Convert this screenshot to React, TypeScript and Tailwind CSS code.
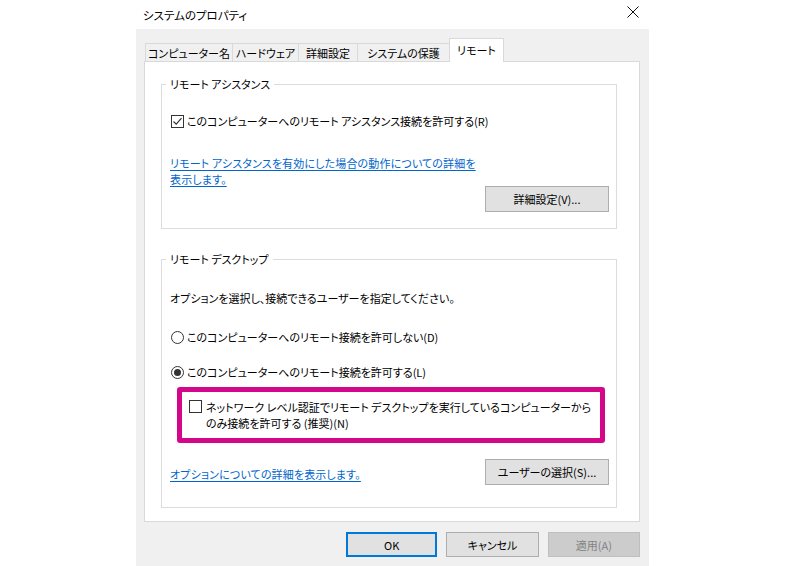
import React from "react";

function CheckBox({ checked }: { checked?: boolean }) {
  return (
    <span className="w-[13px] h-[13px] border border-[#333333] bg-white flex items-center justify-center shrink-0">
      {checked && (
        <svg width="11" height="11" viewBox="0 0 11 11">
          <path d="M1.5 5.5 L4.2 8.2 L9.5 2.2" stroke="#333333" strokeWidth="1.2" fill="none" />
        </svg>
      )}
    </span>
  );
}

function Radio({ checked }: { checked?: boolean }) {
  return (
    <span className="w-[13px] h-[13px] rounded-full border border-[#333333] bg-white flex items-center justify-center shrink-0">
      {checked && <span className="w-[7px] h-[7px] rounded-full bg-[#333333]" />}
    </span>
  );
}

function Btn({ children, className = "" }: { children: React.ReactNode; className?: string }) {
  return (
    <div className={"flex items-center justify-center border bg-[#e1e1e1] leading-[16px] whitespace-nowrap " + className}>
      {children}
    </div>
  );
}

export default function App() {
  return (
    <div className="w-[785px] h-[566px] bg-white text-[11px] text-black overflow-hidden whitespace-nowrap font-['Noto_Sans_CJK_JP','Noto_Sans',sans-serif] [font-feature-settings:'palt']">
      {/* title bar */}
      <div className="h-[29px] flex items-center justify-between pl-[143px] pr-[146px]">
        <span className="leading-[16px] text-[11.5px]">システムのプロパティ</span>
        <svg width="12" height="12" viewBox="0 0 12 12" className="self-start mt-[6px]">
          <path d="M0.5 0.5 L11.5 11.5 M11.5 0.5 L0.5 11.5" stroke="#111111" strokeWidth="1" fill="none" />
        </svg>
      </div>

      {/* body */}
      <div className="ml-[136px] w-[513px] h-[537px] bg-[#f0f0f0] pt-[9px] pl-[8px] pr-[9px]">
        {/* tabs */}
        <div className="flex items-end h-[23px] pl-[1px]">
          <div className="w-[88px] h-[18px] border-t border-l border-r border-[#d9d9d9] bg-[#f0f0f0] flex items-center justify-center leading-[16px]">コンピューター名</div>
          <div className="w-[67px] -ml-px h-[18px] border-t border-l border-r border-[#d9d9d9] bg-[#f0f0f0] flex items-center justify-center leading-[16px]">ハードウェア</div>
          <div className="w-[60px] -ml-px h-[18px] border-t border-l border-r border-[#d9d9d9] bg-[#f0f0f0] flex items-center justify-center leading-[16px]">詳細設定</div>
          <div className="w-[93px] -ml-px h-[18px] border-t border-l border-r border-[#d9d9d9] bg-[#f0f0f0] flex items-center justify-center leading-[16px]">システムの保護</div>
          <div className="w-[55px] -ml-px h-[24px] -mb-px relative z-10 border-t border-l border-r border-[#d9d9d9] bg-white flex items-start justify-center pt-[3px] leading-[16px]">リモート</div>
        </div>

        {/* panel */}
        <div className="w-[496px] h-[461px] border border-[#d9d9d9] bg-white pt-[14px] pl-[16px] pr-[22px]">
          {/* group 1 */}
          <fieldset className="border border-[#dcdcdc] px-0 pb-[16px] m-0">
            <legend className="ml-[4px] px-[4px] leading-[16px]">リモート アシスタンス</legend>
            <div className="pl-[8px] pr-[7px]">
              <div className="mt-[21px] h-[16px] flex items-center gap-[3px] pl-[1px]">
                <CheckBox checked />
                <span className="leading-[16px]">このコンピューターへのリモート アシスタンス接続を許可する(R)</span>
              </div>
              <div className="mt-[26px] flex justify-between items-start">
                <span className="leading-[16px] text-[#0066cc] underline underline-offset-[2px] tracking-[0.15px]">
                  リモート アシスタンスを有効にした場合の動作についての詳細を
                  <br />
                  表示します。
                </span>
                <Btn className="mt-[31px] w-[124px] h-[26px] border-[#adadad]">詳細設定(V)...</Btn>
              </div>
            </div>
          </fieldset>

          {/* group 2 */}
          <fieldset className="mt-[22px] border border-[#dcdcdc] px-0 pb-[22px] m-0">
            <legend className="ml-[4px] px-[4px] leading-[16px]">リモート デスクトップ</legend>
            <div className="pl-[8px] pr-[7px]">
              <div className="mt-[23px] leading-[16px]">オプションを選択し、接続できるユーザーを指定してください。</div>
              <div className="mt-[23px] h-[16px] flex items-center gap-[3px] pl-[1px]">
                <Radio />
                <span className="leading-[16px]">このコンピューターへのリモート接続を許可しない(D)</span>
              </div>
              <div className="mt-[19px] h-[16px] flex items-center gap-[3px] pl-[1px]">
                <Radio checked />
                <span className="leading-[16px]">このコンピューターへのリモート接続を許可する(L)</span>
              </div>
              <div className="mt-[7px] ml-[7px] w-[428px] h-[56px] border-[5px] border-[#d4078a] rounded-[3px] pt-[7px] pl-[7px] flex items-start gap-[4px]">
                <span className="mt-px">
                  <CheckBox />
                </span>
                <span className="leading-[16px]">
                  ネットワーク レベル認証でリモート デスクトップを実行しているコンピューターから
                  <br />
                  のみ接続を許可する (推奨)(N)
                </span>
              </div>
              <div className="mt-[16px] flex justify-between items-center">
                <span className="leading-[16px] mt-[3px] text-[#0066cc] underline underline-offset-[2px] tracking-[0.15px]">オプションについての詳細を表示します。</span>
                <Btn className="w-[124px] h-[26px] border-[#adadad]">ユーザーの選択(S)...</Btn>
              </div>
            </div>
          </fieldset>
        </div>

        {/* bottom buttons */}
        <div className="mt-[10px] ml-[202px] flex gap-[9px]">
          <Btn className="w-[92px] h-[25px] border-[#0078d7] shadow-[inset_0_0_0_1px_#0078d7]">OK</Btn>
          <Btn className="w-[93px] h-[25px] border-[#adadad]">キャンセル</Btn>
          <div className="w-[93px] h-[25px] flex items-center justify-center border border-[#bfbfbf] bg-[#cccccc] text-[#838383] leading-[16px]">適用(A)</div>
        </div>
      </div>
    </div>
  );
}
